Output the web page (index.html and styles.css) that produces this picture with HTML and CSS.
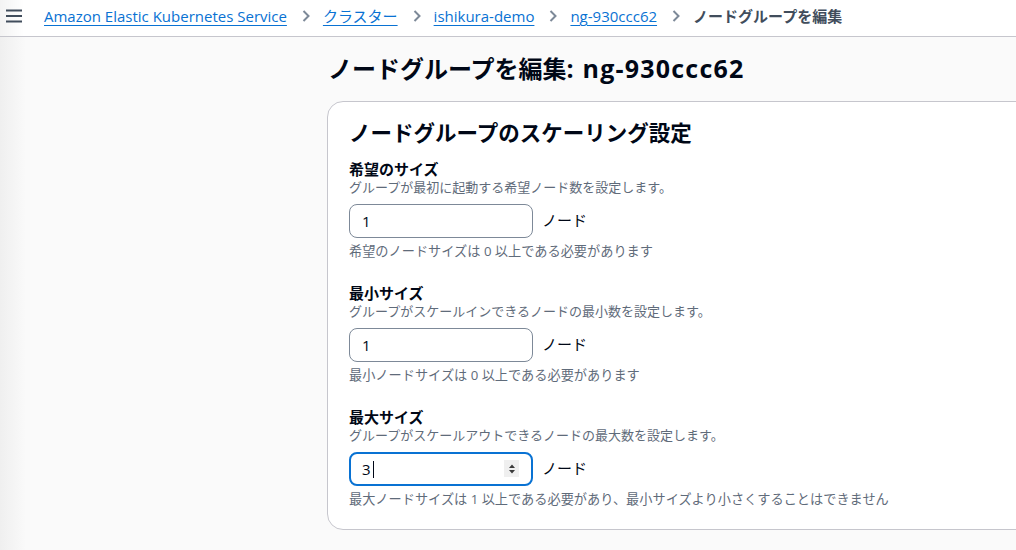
FILE: index.html
```html
<!DOCTYPE html>
<html lang="ja">
<head>
    <meta charset="UTF-8">
    <meta name="viewport" content="width=device-width, initial-scale=1.0">
    <title>ノードグループを編集</title>
    <link rel="stylesheet" href="styles.css">
</head>
<body>
    <div class="topbar">
        <button class="menu-btn" aria-label="メニュー">
            <svg width="16" height="14" viewBox="0 0 16 14">
                <path d="M0 1.5h16M0 7h16M0 12.5h16" stroke="#414d5c" stroke-width="2"/>
            </svg>
        </button>
        <nav class="breadcrumbs">
            <a href="#">Amazon Elastic Kubernetes Service</a>
            <span class="sep"><svg width="8" height="12" viewBox="0 0 8 12"><path d="M1.5 1l5 5-5 5" fill="none" stroke="#7d8998" stroke-width="2"/></svg></span>
            <a href="#">クラスター</a>
            <span class="sep"><svg width="8" height="12" viewBox="0 0 8 12"><path d="M1.5 1l5 5-5 5" fill="none" stroke="#7d8998" stroke-width="2"/></svg></span>
            <a href="#">ishikura-demo</a>
            <span class="sep"><svg width="8" height="12" viewBox="0 0 8 12"><path d="M1.5 1l5 5-5 5" fill="none" stroke="#7d8998" stroke-width="2"/></svg></span>
            <a href="#">ng-930ccc62</a>
            <span class="sep"><svg width="8" height="12" viewBox="0 0 8 12"><path d="M1.5 1l5 5-5 5" fill="none" stroke="#7d8998" stroke-width="2"/></svg></span>
            <span class="current">ノードグループを編集</span>
        </nav>
    </div>

    <div class="layout">
        <div class="side"></div>
        <main class="main">
            <h1>ノードグループを編集<span class="latin">: ng-930ccc62</span></h1>

            <section class="card">
                <h2>ノードグループのスケーリング設定</h2>

                <div class="field">
                    <label for="desired">希望のサイズ</label>
                    <div class="desc">グループが最初に起動する希望ノード数を設定します。</div>
                    <div class="control">
                        <div class="input-wrap">
                            <input type="text" id="desired" value="1">
                        </div>
                        <span class="unit">ノード</span>
                    </div>
                    <div class="hint">希望のノードサイズは 0 以上である必要があります</div>
                </div>

                <div class="field">
                    <label for="min">最小サイズ</label>
                    <div class="desc">グループがスケールインできるノードの最小数を設定します。</div>
                    <div class="control">
                        <div class="input-wrap">
                            <input type="text" id="min" value="1">
                        </div>
                        <span class="unit">ノード</span>
                    </div>
                    <div class="hint">最小ノードサイズは 0 以上である必要があります</div>
                </div>

                <div class="field">
                    <label for="max">最大サイズ</label>
                    <div class="desc">グループがスケールアウトできるノードの最大数を設定します。</div>
                    <div class="control">
                        <div class="input-wrap focused">
                            <input type="text" id="max" value="3">
                            <span class="caret"></span>
                            <span class="spinner">
                                <svg width="8" height="12" viewBox="0 0 8 12"><path d="M4 1.5L7 5H1zM4 10.5L1 7h6z" fill="#3a3a3a"/></svg>
                            </span>
                        </div>
                        <span class="unit">ノード</span>
                    </div>
                    <div class="hint">最大ノードサイズは 1 以上である必要があり、最小サイズより小さくすることはできません</div>
                </div>
            </section>
        </main>
    </div>
</body>
</html>
```

FILE: styles.css
```css
body {
    font-family: 'Open Sans', 'Noto Sans CJK JP', sans-serif;
    margin: 0;
    padding: 0;
    background: linear-gradient(to right, #efefef, #fafafa 26px);
    color: #000716;
    overflow: hidden;
    height: 550px;
}
.topbar {
    height: 36px;
    display: flex;
    align-items: center;
    background: linear-gradient(to right, #f3f3f3, #ffffff 24px);
    border-bottom: 1px solid #c6c6cd;
}
.menu-btn {
    background: none;
    border: none;
    padding: 0;
    margin: 0 0 4px 6px;
    width: 16px;
    height: 14px;
    display: flex;
}
.breadcrumbs {
    display: flex;
    align-items: center;
    margin-left: 22px;
    font-size: 15px;
    line-height: 20px;
    white-space: nowrap;
    padding-bottom: 4px;
}
.breadcrumbs a {
    color: #0972d3;
    text-decoration: underline;
    text-underline-offset: 3px;
}
.breadcrumbs .sep {
    display: flex;
    margin: 0 13px 0 15px;
}
.breadcrumbs .current {
    color: #414d5c;
    font-weight: 600;
}
.layout {
    display: flex;
}
.side {
    width: 327px;
    flex-shrink: 0;
}
.main {
    width: 760px;
    flex-shrink: 0;
}
h1 {
    font-size: 24px;
    line-height: 30px;
    font-weight: 700;
    margin: 16px 0 17px 1px;
}
h1 .latin {
    font-size: 25px;
    letter-spacing: 1.2px;
}
.card {
    background-color: #ffffff;
    border: 1px solid #c6c6cd;
    border-radius: 16px;
    padding: 16px 20px 21px 21px;
}
h2 {
    font-size: 21.5px;
    line-height: 30px;
    font-weight: 700;
    margin: 0 0 11px 0;
}
.field {
    margin-bottom: 23px;
}
.field:last-child {
    margin-bottom: 0;
}
.field label {
    display: block;
    font-size: 15px;
    font-weight: 700;
    line-height: 20px;
}
.desc, .hint {
    font-size: 13px;
    line-height: 17px;
    color: #5f6b7a;
}
.hint {
    font-size: 13.2px;
}
.control {
    display: flex;
    align-items: center;
    margin-top: 8px;
}
.input-wrap {
    position: relative;
    width: 184px;
    height: 34px;
    box-sizing: border-box;
    border: 1px solid #7d8998;
    border-radius: 8px;
    background-color: #ffffff;
}
.input-wrap input {
    width: 100%;
    height: 100%;
    box-sizing: border-box;
    border: none;
    outline: none;
    background: transparent;
    padding: 0 12px;
    font-family: inherit;
    font-size: 15px;
    color: #000716;
}
.input-wrap.focused {
    border: 2px solid #0972d3;
}
.input-wrap.focused input {
    padding: 0 11px;
}
.caret {
    position: absolute;
    left: 22px;
    top: 7px;
    width: 1px;
    height: 17px;
    background-color: #000716;
}
.spinner {
    position: absolute;
    right: 12px;
    top: 6px;
    width: 15px;
    height: 17px;
    background-color: #efefef;
    display: flex;
    align-items: center;
    justify-content: center;
}
.unit {
    font-size: 15px;
    margin-left: 9px;
    margin-top: -4px;
}
.hint {
    margin-top: 5px;
}
```
